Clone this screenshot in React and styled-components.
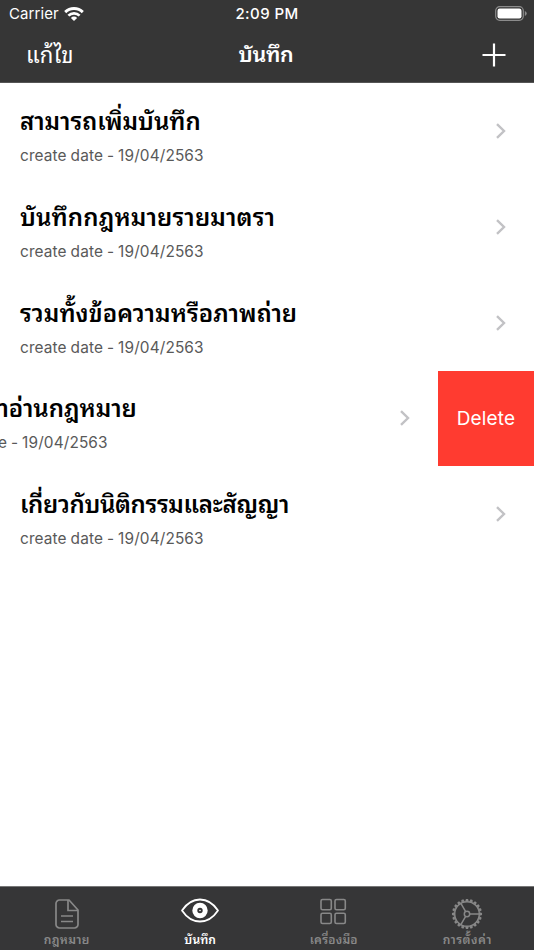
import React from "react";
import styled, { createGlobalStyle } from "styled-components";

const GlobalStyle = createGlobalStyle`
  * {
    box-sizing: border-box;
  }

  body {
    margin: 0;
    background-color: #fff;
    font-family: Inter, "Noto Sans Thai Looped", Loma, Waree, Garuda, "Liberation Sans", sans-serif;
  }
`;

const Screen = styled.div`
  display: flex;
  flex-direction: column;
  width: 534px;
  height: 950px;
  overflow: hidden;
  background-color: #fff;
`;

const Header = styled.header`
  height: 83px;
  flex-shrink: 0;
  background-color: #363636;
  border-bottom: 1px solid #555;
  color: #fff;
`;

const StatusBar = styled.div`
  display: grid;
  grid-template-columns: 1fr auto 1fr;
  align-items: center;
  height: 27px;
  padding: 0 7px 0 9px;
  font-size: 15px;
  line-height: 27px;
`;

const Carrier = styled.div`
  display: flex;
  align-items: center;
  gap: 5px;
  letter-spacing: 0.1px;
`;

const Clock = styled.div`
  margin-right: 2px;
  font-weight: 500;
  letter-spacing: 0.4px;
`;

const Battery = styled.svg`
  justify-self: end;
`;

const NavBar = styled.nav`
  display: grid;
  grid-template-columns: 1fr auto 1fr;
  align-items: center;
  height: 55px;
  padding: 0 28px 0 26px;
`;

const EditButton = styled.span`
  font-size: 22px;
  line-height: 30px;
  letter-spacing: 0.1px;
`;

const Title = styled.h1`
  margin: 0;
  padding-bottom: 1px;
  font-size: 21.5px;
  line-height: 30px;
  font-weight: 600;
  letter-spacing: -0.3px;
`;

const AddIcon = styled.svg`
  justify-self: end;
`;

const List = styled.main`
  flex: 1;
  min-height: 0;
  padding-top: 0.2px;
`;

const Row = styled.div`
  display: flex;
  width: 534px;
  height: 95.8px;
  margin-left: ${(props) => (props.$open ? "-96px" : "0")};
`;

const Note = styled.div`
  display: flex;
  flex: 0 0 534px;
  align-items: center;
  justify-content: space-between;
  padding: 0 28px 0 20px;
`;

const NoteText = styled.div`
  padding-top: 9px;
`;

const NoteTitle = styled.h2`
  margin: 0;
  font-size: 24px;
  line-height: 34px;
  font-weight: 600;
  white-space: nowrap;
  letter-spacing: ${(props) => props.$spacing || 0}px;
`;

const NoteDate = styled.p`
  margin: 7px 0 0;
  font-size: 15.4px;
  line-height: 20px;
  letter-spacing: 0.12px;
  word-spacing: -0.5px;
  color: #595959;
  white-space: nowrap;
`;

const DeleteButton = styled.div`
  display: flex;
  flex: 0 0 96px;
  align-items: center;
  justify-content: center;
  background-color: #ff3b30;
  color: #fff;
  font-size: 19px;
  letter-spacing: 0.15px;
`;

const TabBar = styled.footer`
  display: grid;
  grid-template-columns: repeat(4, 1fr);
  height: 64px;
  flex-shrink: 0;
  background-color: #363637;
  border-top: 1px solid #777;
`;

const Tab = styled.div`
  display: flex;
  flex-direction: column;
  align-items: center;
  padding-top: 12px;
  color: ${(props) => (props.$active ? "#fff" : "#888")};
`;

const TabIcon = styled.svg`
  flex-shrink: 0;
  overflow: visible;
`;

const TabLabel = styled.span`
  margin-top: 3px;
  font-size: 12px;
  line-height: 16px;
  font-weight: 600;
  letter-spacing: ${(props) => props.$spacing || 0}px;
`;

const notes = [
  { title: "สามารถเพิ่มบันทึก", spacing: -0.05 },
  { title: "บันทึกกฎหมายรายมาตรา", spacing: 0.15 },
  { title: "รวมทั้งข้อความหรือภาพถ่าย", spacing: 0.08 },
  { title: "เพิ่มเวลาอ่านกฎหมาย", spacing: -0.05, open: true },
  { title: "เกี่ยวกับนิติกรรมและสัญญา", spacing: -0.33 },
];

const teeth = Array.from({ length: 20 }, (_, i) => i * 18);

const Wifi = () => (
  <svg width="20" height="14" viewBox="0 0 20 14" fill="none">
    <path d="M1.2 5.1a12.6 12.6 0 0 1 17.6 0" stroke="#fff" strokeWidth="2.9" />
    <path d="M4.4 8.6a8 8 0 0 1 11.2 0" stroke="#fff" strokeWidth="2.7" />
    <path d="M10 14 6.9 10.9a4.3 4.3 0 0 1 6.2 0Z" fill="#fff" />
  </svg>
);

const Chevron = () => (
  <svg width="10" height="16" viewBox="0 0 10 16" fill="none">
    <path d="m1 1.2 7 6.8-7 6.8" stroke="#c2c2c5" strokeWidth="2.4" />
  </svg>
);

const LawIcon = () => (
  <TabIcon width="24" height="30" viewBox="0 0 24 30" fill="none" stroke="currentColor" strokeWidth="1.7">
    <path d="M14 1H4.5A3.5 3.5 0 0 0 1 4.5v21A3.5 3.5 0 0 0 4.5 29h15a3.5 3.5 0 0 0 3.5-3.5V11Z" strokeLinejoin="round" />
    <path d="M13 1v10.500h10M6 17h12M6 22.500h12" />
  </TabIcon>
);

const EyeIcon = () => (
  <TabIcon width="38" height="30" viewBox="0 0 38 30" fill="none">
    <path d="M1 11.5C6 4 12 .5 19 .5s13 3.5 18 11c-5 7.5-11 11-18 11s-13-3.5-18-11Z" stroke="currentColor" strokeWidth="1.8" strokeLinejoin="round" />
    <circle cx="19" cy="11.5" r="5.2" stroke="currentColor" strokeWidth="5" />
    <circle cx="19" cy="11.5" r="0.8" fill="currentColor" />
  </TabIcon>
);

const GridIcon = () => (
  <TabIcon width="27" height="30" viewBox="0 0 27 30" fill="none" stroke="currentColor" strokeWidth="1.6">
    <rect x="1" y="0.5" width="10.3" height="10.3" rx="1.5" />
    <rect x="15" y="0.5" width="10.3" height="10.3" rx="1.5" />
    <rect x="1" y="14.2" width="10.3" height="10.3" rx="1.5" />
    <rect x="15" y="14.2" width="10.3" height="10.3" rx="1.5" />
  </TabIcon>
);

const GearIcon = () => (
  <TabIcon width="30" height="30" viewBox="0 0 30 30" fill="none" stroke="currentColor" strokeWidth="1.5">
    <circle cx="15" cy="15" r="12.3" />
    <circle cx="15" cy="15" r="2.7" />
    <path d="M17.7 15h9.6M13.65 12.66 8.85 4.35M13.65 17.34 8.85 25.65" />
    {teeth.map((angle) => (
      <path key={angle} d="M14 2.5 14.5.7h1L16 2.5" transform={`rotate(${angle} 15 15)`} />
    ))}
  </TabIcon>
);

const tabs = [
  { label: "กฎหมาย", icon: <LawIcon />, spacing: 0.3 },
  { label: "บันทึก", icon: <EyeIcon />, spacing: 0.1, active: true },
  { label: "เครื่องมือ", icon: <GridIcon />, spacing: 0.2 },
  { label: "การตั้งค่า", icon: <GearIcon />, spacing: 0.45 },
];

const App = () => {
  return (
    <Screen>
      <GlobalStyle />
      <Header>
        <StatusBar>
          <Carrier>
            Carrier
            <Wifi />
          </Carrier>
          <Clock>2:09 PM</Clock>
          <Battery width="32" height="15" viewBox="0 0 32 15">
            <rect x="0.7" y="0.7" width="27.6" height="13.6" rx="4" fill="none" stroke="#8c8c8c" strokeWidth="1.2" />
            <rect x="2.5" y="2.5" width="24" height="10" rx="2.2" fill="#fff" />
            <path d="M29.8 5v5q1.9-.7 1.9-2.5T29.8 5" fill="#8c8c8c" />
          </Battery>
        </StatusBar>
        <NavBar>
          <EditButton>แก้ไข</EditButton>
          <Title>บันทึก</Title>
          <AddIcon width="24" height="24" viewBox="0 0 24 24">
            <path d="M12 .5v23M.5 12h23" stroke="#fff" strokeWidth="2.2" />
          </AddIcon>
        </NavBar>
      </Header>
      <List>
        {notes.map((note) => (
          <Row key={note.title} $open={note.open}>
            <Note>
              <NoteText>
                <NoteTitle $spacing={note.spacing}>{note.title}</NoteTitle>
                <NoteDate>create date - 19/04/2563</NoteDate>
              </NoteText>
              <Chevron />
            </Note>
            {note.open && <DeleteButton>Delete</DeleteButton>}
          </Row>
        ))}
      </List>
      <TabBar>
        {tabs.map((tab) => (
          <Tab key={tab.label} $active={tab.active}>
            {tab.icon}
            <TabLabel $spacing={tab.spacing}>{tab.label}</TabLabel>
          </Tab>
        ))}
      </TabBar>
    </Screen>
  );
};

export default App;
